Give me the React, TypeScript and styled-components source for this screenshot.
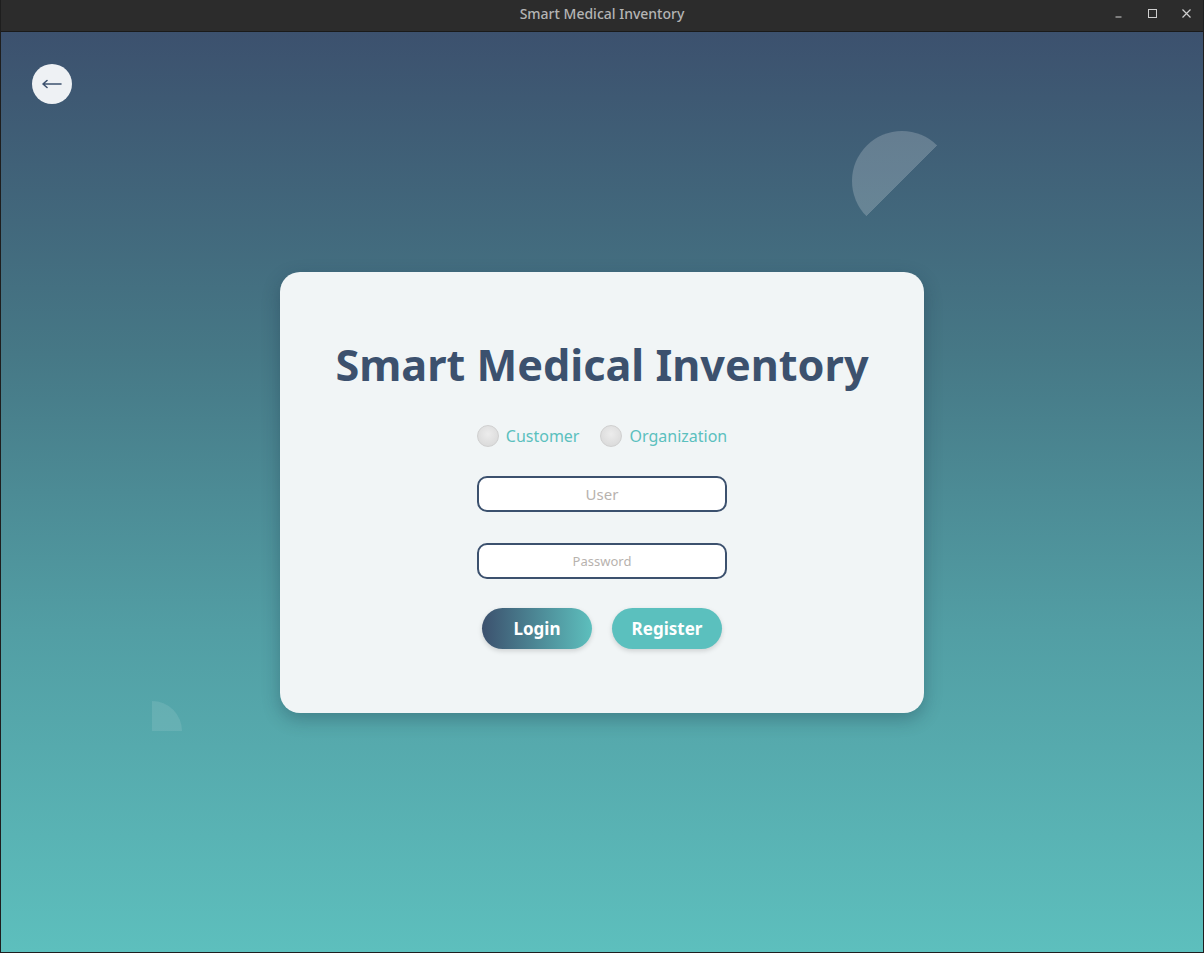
import React from "react";
import styled, { createGlobalStyle } from "styled-components";

const GlobalStyle = createGlobalStyle`
  html, body {
    margin: 0;
    padding: 0;
    background: #2c2c2c;
  }
  * {
    box-sizing: border-box;
  }
`;

const Window = styled.div`
  display: flex;
  flex-direction: column;
  width: 1204px;
  height: 953px;
  font-family: "Noto Sans", "Open Sans", sans-serif;
  border-left: 1px solid #1e1e1e;
  border-right: 1px solid #1e1e1e;
  border-bottom: 1px solid #1e1e1e;
`;

const TitleBar = styled.div`
  position: relative;
  display: flex;
  align-items: center;
  justify-content: center;
  height: 32px;
  flex-shrink: 0;
  background: #2c2c2c;
  border-bottom: 1px solid #1a1a1a;
  color: #b4b4b4;
  font-size: 14px;
  font-weight: 500;
  padding-bottom: 5px;
`;

const Controls = styled.div`
  position: absolute;
  right: 10px;
  top: 0;
  height: 100%;
  display: flex;
  align-items: center;
  gap: 20px;
  padding-bottom: 5px;
`;

const ControlBtn = styled.span`
  width: 14px;
  display: flex;
  justify-content: center;
`;

const Content = styled.main`
  position: relative;
  flex: 1;
  display: flex;
  align-items: center;
  justify-content: center;
  overflow: hidden;
  background: linear-gradient(180deg, #3c516e 0%, #467886 35%, #529ea4 65%, #5dbfbd 100%);
`;

const BackButton = styled.button`
  position: absolute;
  left: 31px;
  top: 32px;
  width: 40px;
  height: 40px;
  border-radius: 50%;
  border: none;
  background: #eef1f4;
  display: flex;
  align-items: center;
  justify-content: center;
  padding: 0;
`;

const HalfDisc = styled.div`
  position: absolute;
  left: 851px;
  top: 99px;
  width: 100px;
  height: 100px;
  border-radius: 50%;
  background: linear-gradient(135deg, rgba(255, 255, 255, 0.2) 50%, transparent 50%);
`;

const QuarterDisc = styled.div`
  position: absolute;
  left: 151px;
  top: 669px;
  width: 30px;
  height: 30px;
  border-top-right-radius: 30px;
  background: rgba(255, 255, 255, 0.1);
`;

const Card = styled.section`
  width: 644px;
  height: 441px;
  border-radius: 20px;
  background: #f1f5f6;
  box-shadow: 0 6px 18px rgba(20, 40, 60, 0.3);
  display: flex;
  flex-direction: column;
  align-items: center;
  padding-top: 63px;
`;

const Title = styled.h1`
  margin: 0;
  font-size: 43.2px;
  line-height: 1.4;
  font-weight: 700;
  color: #3c516e;
`;

const RoleRow = styled.div`
  display: flex;
  gap: 21px;
  margin-top: 30px;
`;

const RoleOption = styled.label`
  display: flex;
  align-items: center;
  gap: 7px;
  color: #5bc0be;
  font-size: 16px;
`;

const RadioDot = styled.span`
  width: 22px;
  height: 22px;
  border-radius: 50%;
  background: radial-gradient(circle at 50% 40%, #ececec, #d6d6d6);
  border: 1px solid #d0d0d0;
`;

const Field = styled.input<{ $small?: boolean }>`
  width: 250px;
  height: 36px;
  margin-top: ${({ $small }) => ($small ? "31px" : "29px")};
  border: 2px solid #3c516e;
  border-radius: 10px;
  background: #ffffff;
  text-align: center;
  font-family: "Noto Sans", sans-serif;
  font-size: ${({ $small }) => ($small ? "13px" : "15px")};
  color: #3c516e;
  outline: none;

  &::placeholder {
    color: #b7b2ae;
  }
`;

const ButtonRow = styled.div`
  display: flex;
  gap: 20px;
  margin-top: 29px;
`;

const ActionButton = styled.button<{ $gradient?: boolean }>`
  width: 110px;
  height: 41px;
  border: none;
  border-radius: 21px;
  background: ${({ $gradient }) =>
    $gradient ? "linear-gradient(90deg, #3c516e 0%, #5dbfbd 100%)" : "#5bc0be"};
  color: #ffffff;
  font-family: "Noto Sans", sans-serif;
  font-size: 17px;
  font-weight: 700;
  box-shadow: 0 2px 5px rgba(0, 0, 0, 0.15);
`;

const App = () => {
  return (
    <>
      <GlobalStyle />
      <Window>
        <TitleBar>
          Smart Medical Inventory
          <Controls>
            <ControlBtn>
              <svg width="9" height="9" viewBox="0 0 9 9">
                <path d="M1.5 8 H7.5" stroke="#cfcfcf" strokeWidth="1" />
              </svg>
            </ControlBtn>
            <ControlBtn>
              <svg width="9" height="9" viewBox="0 0 9 9">
                <rect x="0.5" y="0.5" width="8" height="8" fill="none" stroke="#cfcfcf" />
              </svg>
            </ControlBtn>
            <ControlBtn>
              <svg width="9" height="9" viewBox="0 0 9 9">
                <path d="M0.5 0.5 L8.5 8.5 M8.5 0.5 L0.5 8.5" stroke="#cfcfcf" strokeWidth="1.2" />
              </svg>
            </ControlBtn>
          </Controls>
        </TitleBar>
        <Content>
          <BackButton aria-label="Back">
            <svg width="20" height="10" viewBox="0 0 20 10">
              <path d="M1 5 H19 M1 5 L5 1.5 M1 5 L5 8.5" stroke="#3c516e" strokeWidth="1.6" fill="none" strokeLinecap="round" />
            </svg>
          </BackButton>
          <HalfDisc />
          <QuarterDisc />
          <Card>
            <Title>Smart Medical Inventory</Title>
            <RoleRow>
              <RoleOption>
                <RadioDot />
                Customer
              </RoleOption>
              <RoleOption>
                <RadioDot />
                Organization
              </RoleOption>
            </RoleRow>
            <Field placeholder="User" />
            <Field $small type="password" placeholder="Password" />
            <ButtonRow>
              <ActionButton $gradient>Login</ActionButton>
              <ActionButton>Register</ActionButton>
            </ButtonRow>
          </Card>
        </Content>
      </Window>
    </>
  );
};

export default App;
